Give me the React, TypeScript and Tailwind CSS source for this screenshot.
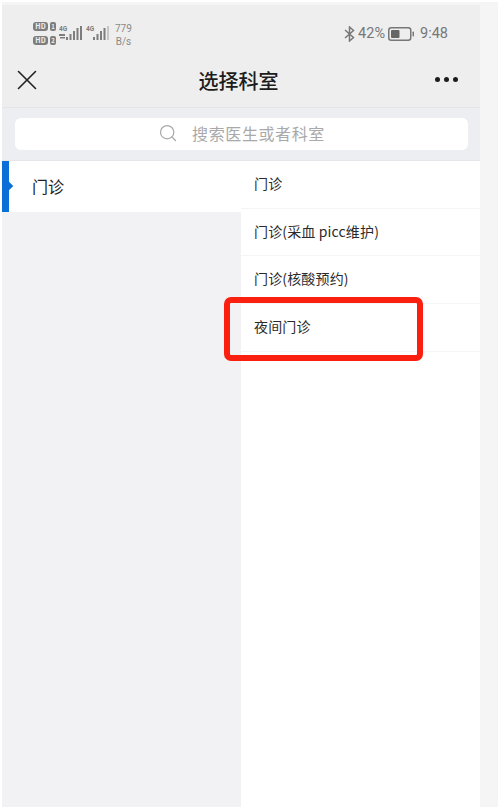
import { Search, X } from 'lucide-react';

const subDepartments = ['门诊', '门诊(采血 picc维护)', '门诊(核酸预约)', '夜间门诊'];

function SimBadge({ slot }: { slot: string }) {
  return (
    <div className="flex items-center gap-[2px]">
      <span className="flex h-[9px] w-[15px] items-center justify-center rounded-[3px] bg-[#7d7d7d] text-[7px] font-bold leading-none text-[#eeeeee]">
        HD
      </span>
      <span className="flex h-[9px] w-[6px] items-center justify-center rounded-[2px] bg-[#7d7d7d] text-[6px] font-bold leading-none text-[#eeeeee]">
        {slot}
      </span>
    </div>
  );
}

function Signal({ arrows }: { arrows?: boolean }) {
  return (
    <svg width="24" height="17" viewBox="0 0 24 17" fill="#7d7d7d" className="block">
      <text x="0" y="7" fontSize="6.5" fontWeight="700" fontFamily="Roboto, sans-serif">4G</text>
      {arrows && <rect x="0" y="10" width="6" height="2" />}
      {arrows && <rect x="1" y="13" width="5" height="1.5" />}
      <rect x="7" y="13" width="2" height="3" />
      <rect x="10.5" y="10" width="2" height="6" />
      <rect x="14" y="7" width="2" height="9" />
      <rect x="17.5" y="4" width="2" height="12" />
      <rect x="21" y="2" width="2" height="14" opacity={arrows ? 1 : 0.35} />
    </svg>
  );
}

function Bluetooth() {
  return (
    <svg width="11" height="16" viewBox="0 0 11 16" fill="none" stroke="#777777" strokeWidth="1.5" className="block">
      <path d="M1 4l8.5 7.5L5.5 15V1l4 3.5L1 12" />
    </svg>
  );
}

function Battery() {
  return (
    <svg width="26" height="14" viewBox="0 0 26 14" fill="none" className="block">
      <rect x="0.75" y="0.75" width="22" height="12.5" rx="2.5" stroke="#777777" strokeWidth="1.5" />
      <rect x="3" y="3" width="8.5" height="8" rx="1" fill="#666666" />
      <rect x="24.5" y="4.5" width="1.5" height="5" rx="0.7" fill="#777777" />
    </svg>
  );
}

export default function App() {
  return (
    <div className="h-[809px] w-[500px] overflow-hidden bg-white px-[2px] pt-[2px] font-['Noto_Sans_CJK_SC','Noto_Sans',sans-serif]">
      <div className="h-[805px] bg-[#f5f5f5] pt-[3px]">
        <div className="relative flex h-full w-[478px] flex-col">
          {/* Status bar + nav */}
          <header className="h-[103px] shrink-0 border-b border-[#e4e4e8] bg-[#eeeeee]">
            <div className="flex h-[50px] items-start justify-between pl-[31px] pr-[32px] pt-[15px]">
              <div className="flex items-start">
                <div className="flex flex-col gap-[5px] pt-[2px]">
                  <SimBadge slot="1" />
                  <SimBadge slot="2" />
                </div>
                <div className="ml-[3px] mt-[4px]"><Signal arrows /></div>
                <div className="ml-[3px] mt-[4px]"><Signal /></div>
                <div className="ml-[5px] mt-[2px] flex flex-col items-center font-['Roboto',sans-serif] text-[10px] leading-[13px] text-[#8a8a8a]">
                  <span>779</span>
                  <span>B/s</span>
                </div>
              </div>
              <div className="flex items-center pt-[4px] font-['Roboto',sans-serif] text-[14.5px] leading-[20px] text-[#777777]">
                <Bluetooth />
                <span className="ml-[3px]">42%</span>
                <span className="ml-[3px]"><Battery /></span>
                <span className="ml-[6px]">9:48</span>
              </div>
            </div>
            <div className="flex h-[49px] items-center justify-between pl-[8px] pr-[22px]">
              <X size={34} strokeWidth={1.15} color="#222222" />
              <h1 className="mr-[2px] mt-[3px] text-[20px] font-medium leading-none text-[#1c1c1c]">选择科室</h1>
              <div className="flex gap-[4px]">
                <span className="size-[5px] rounded-full bg-[#1c1c1c]" />
                <span className="size-[5px] rounded-full bg-[#1c1c1c]" />
                <span className="size-[5px] rounded-full bg-[#1c1c1c]" />
              </div>
            </div>
          </header>

          {/* Search */}
          <div className="flex h-[53px] shrink-0 items-center border-b border-[#e6e6ea] bg-[#edeef2] pb-[1px] pl-[13px] pr-[12px]">
            <div className="flex h-[32px] w-full items-center justify-center gap-[14px] rounded-[6px] bg-white pb-[2px] text-[#a9a9a9]">
              <Search size={20} strokeWidth={1.5} color="#a9a9a9" />
              <span className="text-[16px] leading-none tracking-[0.6px]">搜索医生或者科室</span>
            </div>
          </div>

          {/* Departments */}
          <div className="flex min-h-0 flex-1">
            <aside className="w-[239px] shrink-0 bg-[#f2f2f4]">
              <div className="relative flex h-[51px] items-center border-l-[7px] border-[#0a6fd6] bg-white pb-[1px] pl-[23px] text-[16px] text-[#222222]">
                <span className="absolute left-[-3px] top-[22px] size-[6px] rotate-45 bg-[#0a6fd6]" />
                门诊
              </div>
            </aside>
            <ul className="flex-1 bg-white">
              {subDepartments.map((name) => (
                <li
                  key={name}
                  className="flex h-[47.7px] items-center border-b border-[#f5f5f5] pb-[2px] pl-[13px] text-[14px] tracking-[0.15px] text-[#2a2a2a]"
                >
                  {name}
                </li>
              ))}
            </ul>
          </div>

          {/* Red annotation */}
          <div className="absolute left-[222px] top-[292px] h-[64px] w-[199px] rounded-[7px] border-[6px] border-[#fb1f0f]" />
        </div>
      </div>
    </div>
  );
}
